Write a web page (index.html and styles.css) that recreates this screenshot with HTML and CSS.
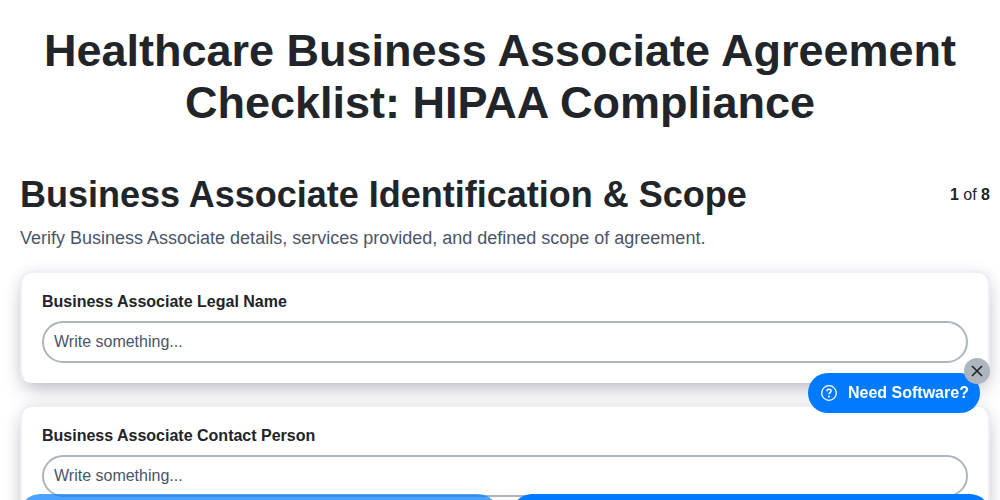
FILE: index.html
```html
<!DOCTYPE html>
<html lang="en">
<head>
<meta charset="utf-8">
<title>Healthcare Business Associate Agreement Checklist: HIPAA Compliance</title>
<link rel="stylesheet" href="styles.css">
</head>
<body>
<main class="page">
  <h1 class="title">Healthcare Business Associate Agreement Checklist: HIPAA Compliance</h1>
  <div class="content">
    <div class="section-head">
      <h2 class="section-title">Business Associate Identification &amp; Scope</h2>
      <div class="pager"><b>1</b> of <b>8</b></div>
    </div>
    <p class="section-desc">Verify Business Associate details, services provided, and defined scope of agreement.</p>
    <section class="card">
      <label class="field-label">Business Associate Legal Name</label>
      <input class="field-input" type="text" placeholder="Write something...">
    </section>
    <section class="card">
      <label class="field-label">Business Associate Contact Person</label>
      <input class="field-input" type="text" placeholder="Write something...">
    </section>
  </div>
</main>
<div class="action-bar">
  <button class="action action-light" type="button"></button>
  <button class="action action-solid" type="button"></button>
</div>
<div class="help">
  <a class="help-pill" href="#">
    <svg class="help-icon" viewBox="0 0 16 16" width="16" height="16" fill="none" stroke="#fff">
      <circle cx="8" cy="8" r="7.3" stroke-width="1.3"/>
      <path d="M5.9 6.2C5.9 5 6.8 4.3 8 4.3s2.1.7 2.1 1.8c0 1.5-2.1 1.6-2.1 3.2" stroke-width="1.5" fill="none"/>
      <circle cx="8" cy="11.5" r=".95" fill="#fff" stroke="none"/>
    </svg>
    <span>Need Software?</span>
  </a>
  <button class="help-close" type="button" aria-label="Close">
    <svg viewBox="0 0 12 12" width="12" height="12" fill="none" stroke="#212529" stroke-width="1.7"><path d="M1 1l10 10M11 1L1 11"/></svg>
  </button>
</div>
</body>
</html>
```
FILE: styles.css
```css
* { box-sizing: border-box; }
html, body { margin: 0; height: 500px; overflow: hidden; }
body { font-family: "Liberation Sans", Arial, sans-serif; color: #212529; background: #fff; }
.page { height: 500px; overflow: hidden; padding-top: 25px; }
.title { margin: 0 0 44px; padding: 0 20px; font-size: 45px; line-height: 52px; font-weight: 700; text-align: center; }
.content { padding: 0 10px 0 20px; }
.section-head { display: flex; justify-content: space-between; align-items: flex-start; }
.section-title { margin: 0; font-size: 36px; line-height: 44px; font-weight: 700; }
.pager { font-size: 16px; line-height: 24px; padding-top: 10px; }
.section-desc { margin: 8px 0 19px; font-size: 18px; line-height: 27px; color: #4a5568; }
.card { display: flex; flex-direction: column; margin-bottom: 22px; padding: 19px 20px; height: 112px; background: #fff; border: 2px solid #eeeef5; border-bottom-color: #fff; border-radius: 12px; box-shadow: 0 10px 20px -4px rgba(50, 50, 90, .3), 0 0 14px rgba(50, 50, 90, .08); }
.field-label { font-size: 16px; line-height: 19px; font-weight: 700; margin-bottom: 10px; }
.field-input { flex: none; width: 100%; height: 42px; padding: 0 10px; font: 16px "Liberation Sans", Arial, sans-serif; color: #4a5568; background: #fff; border: 2px solid #adb5bd; border-radius: 21px; outline: none; }
.field-input::placeholder { color: #4a5568; opacity: 1; }
.action-bar { position: fixed; left: 20px; right: 10px; top: 494px; display: grid; grid-template-columns: 1fr 1fr; gap: 14px; }
.action { height: 40px; border: 0; border-radius: 20px; background: #007bff; }
.action-light { opacity: .7; }
.help { position: fixed; left: 808px; top: 373px; }
.help-pill { display: flex; align-items: center; gap: 11px; width: 172px; height: 40px; padding: 0 11px 0 13px; border-radius: 20px; background: #007bff; color: #fff; font-size: 16px; font-weight: 700; text-decoration: none; }
.help-icon { flex: none; }
.help-close { position: absolute; left: 156px; top: -15px; display: flex; align-items: center; justify-content: center; width: 26px; height: 26px; padding: 0; border: 0; border-radius: 50%; background: #adb5bd; }
```
